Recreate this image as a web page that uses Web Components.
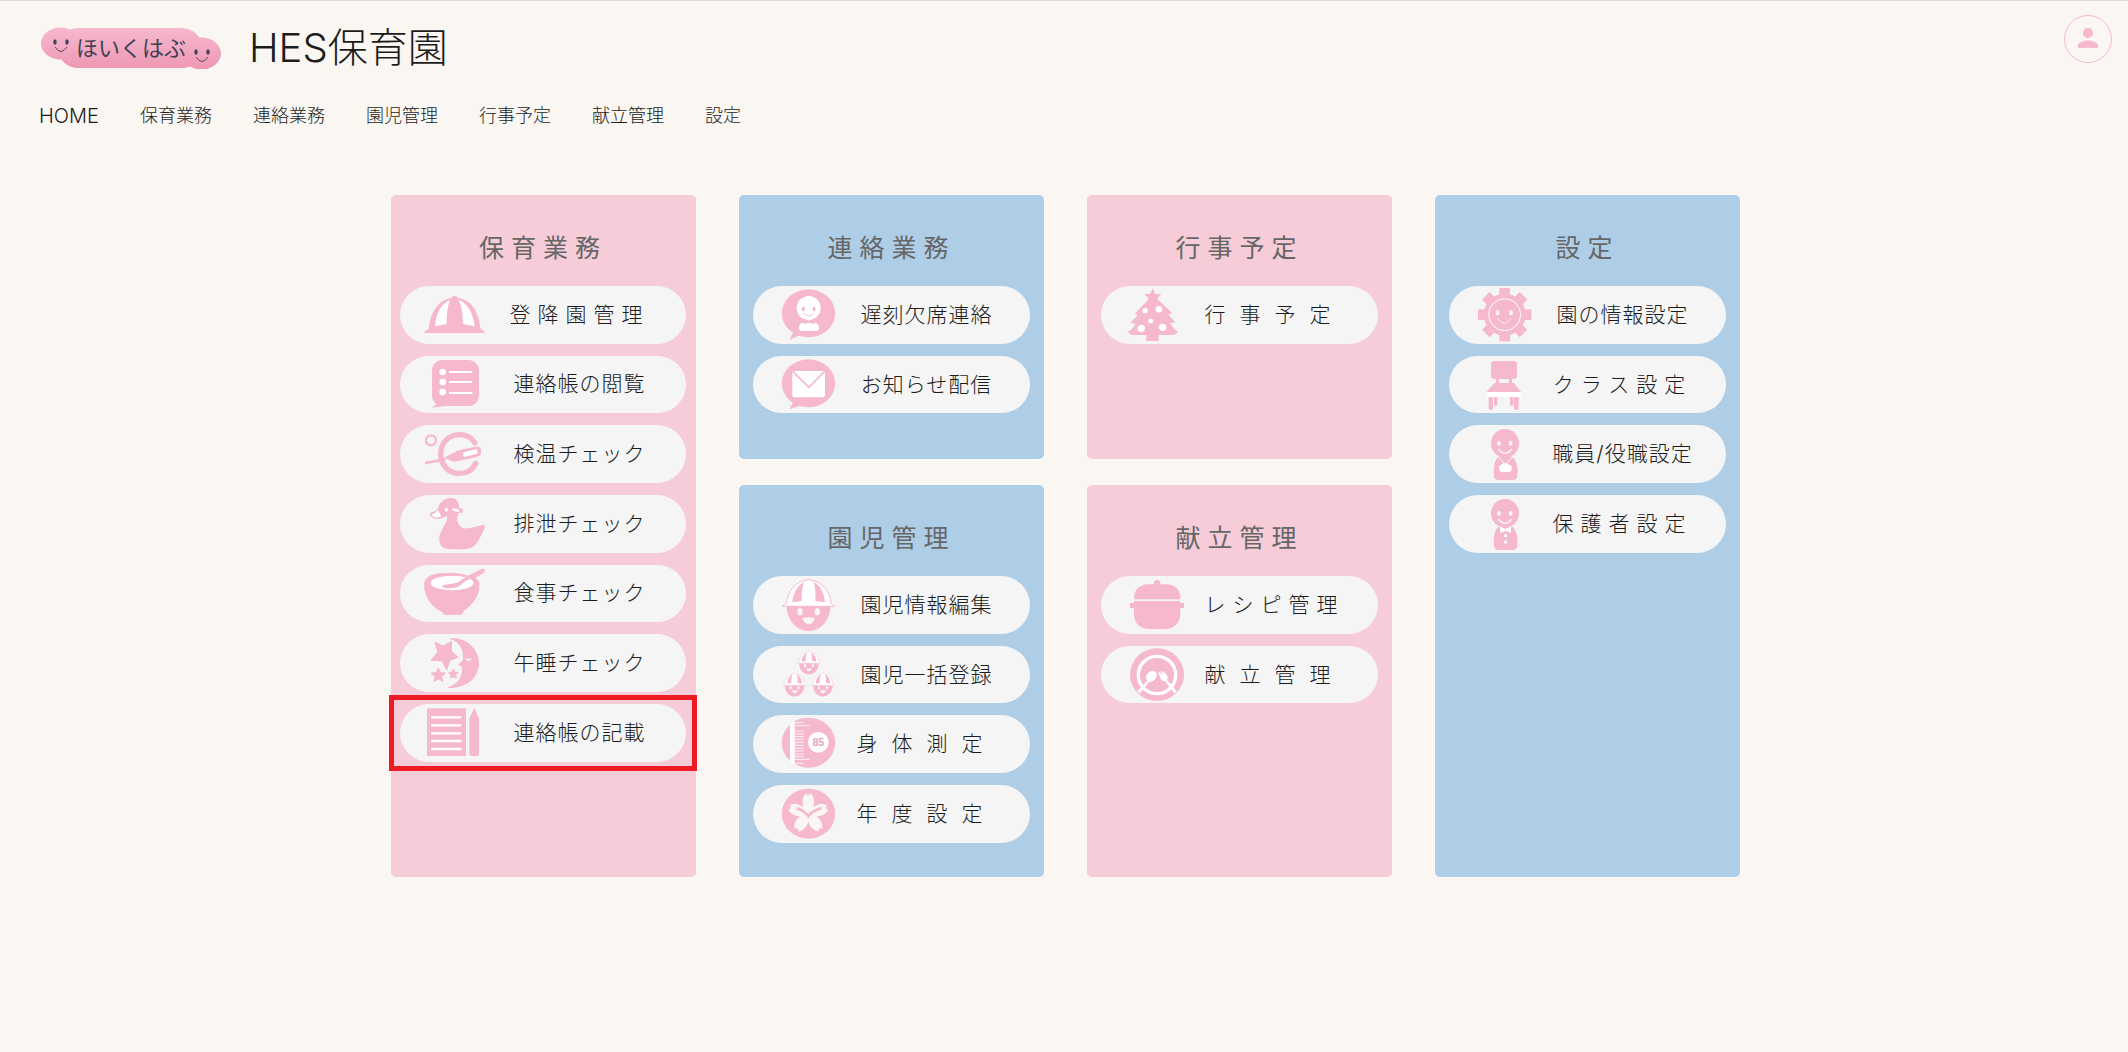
<!DOCTYPE html>
<html lang="ja">
<head>
<meta charset="utf-8">
<title>ほいくはぶ</title>
<style>
  html { background: #faf7f2; }
  body {
    margin: 0;
    --ink: #1c1c1c;
    --rose: #f5b8cd;
    --panel-rose: #f5ccd8;
    --panel-sky: #aecee8;
    color: var(--ink);
    font-family: Inter, "Noto Sans CJK JP", sans-serif;
    font-weight: 300;
  }
</style>
</head>
<body>
<hub-app></hub-app>

<script>
const star = (cx, cy, R, r) => {
  const pts = [];
  for (let i = 0; i < 10; i++) {
    const a = -Math.PI / 2 + i * Math.PI / 5, d = i % 2 ? r : R;
    pts.push((cx + d * Math.cos(a)).toFixed(1) + ',' + (cy + d * Math.sin(a)).toFixed(1));
  }
  return `<polygon points="${pts.join(' ')}" stroke="#f5b8cd" stroke-width="4" stroke-linejoin="round"/>`;
};
const ticks = [743, 768, 777, 785, 793, 802, 811, 820, 828, 837, 845, 865].map(y => `M191 ${y}H218`).join('') + 'M191 752H235M191 853H235';
const child = `
  <path d="M167 390C167 430 195 465 233 465C271 465 298 430 298 390Z"/>
  <path d="M154 391L167 381C170 345 195 315 225 313Q233 306 241 313C272 316 297 345 300 381L311 391Z" fill="#fff" stroke="#f5b8cd" stroke-width="3"/>
  <path d="M184 379C187 350 200 328 219 318C212 340 211 360 212 375Z M282 379C279 350 268 328 248 318C254 340 254 360 253 375Z"/>
  <g fill="#faf7f2"><ellipse cx="207" cy="407" rx="8" ry="11"/><ellipse cx="259" cy="407" rx="8" ry="11"/>
  <path d="M214 426Q233 421 252 426Q247 443 233 445Q219 443 214 426Z"/></g>`;
const headAt = y => `<ellipse cx="240" cy="${y}" rx="42" ry="43"/>
  <g fill="#faf7f2"><ellipse cx="222" cy="${y}" rx="5.500" ry="8"/><ellipse cx="257" cy="${y}" rx="5.500" ry="8"/></g>
  <path d="M220 ${y + 17}Q240 ${y + 43} 260 ${y + 17}" fill="none" stroke="#faf7f2" stroke-width="4"/>`;
const torsoAt = y => `<path d="M220 ${y}C206 ${y + 14} 206 ${y + 35} 207 ${y + 57}Q208 ${y + 70} 222 ${y + 70}H262Q276 ${y + 70} 277 ${y + 57}C279 ${y + 35} 277 ${y + 14} 262 ${y}Z"/>`;

const ICONS = {
  hat: ['132 318 186 174', `
    <path d="M132 459V457L147 445C150 400 175 357 216 354C217 346 231 346 232 354C275 357 298 400 301 445L315 457V459Z"/>
    <path d="M165 439C168 402 182 372 210 359C202 380 199 405 200 432Z M249 432C249 402 245 378 235 359C262 368 280 400 284 439Z" fill="#fff"/>`],
  list: ['132 528 186 174', `
    <rect x="156" y="543" width="141" height="138" rx="32"/><path d="M155 687L176 670L225 680Q185 680 155 687Z"/>
    <g fill="#fff"><circle cx="188" cy="579" r="10"/><circle cx="188" cy="609" r="10"/><circle cx="188" cy="639" r="10"/></g>
    <path d="M207 579H277M207 609H277M207 642H277" stroke="#fff" stroke-width="6"/>`],
  thermo: ['132 735 186 174', `
    <circle cx="153" cy="781" r="15" fill="none" stroke="#f5b8cd" stroke-width="7"/>
    <path d="M284 788C272 769 256 764 238 764C205 764 182 790 182 822C182 855 205 880 238 880C260 880 278 870 287 850" fill="none" stroke="#f5b8cd" stroke-width="16" stroke-linecap="round"/>
    <path d="M135 849L197 838" stroke="#f5b8cd" stroke-width="8"/>
    <path d="M193 833L232 812L285 800Q300 797 303 808V820Q302 828 290 831L235 843Q222 847 214 842Z"/>
    <path d="M250 817L288 808Q292 807 292 812V821L252 831Q248 826 250 817Z" fill="#fff"/>`],
  duck: ['132 45 186 174', `
    <path d="M172 90C178 65 195 53 215 54C232 55 238 68 237 83L249 88L247 99L236 98C230 115 228 133 246 143C262 150 290 138 310 135Q317 135 314 143C305 165 295 185 282 198C270 207 255 208 235 208C215 208 205 208 195 205C180 200 177 185 178 172C180 150 202 130 202 110C198 106 190 114 180 116C165 118 150 112 150 102C152 95 160 97 172 90Z"/>
    <path d="M154 105C163 102 169 97 172 91C177 95 182 102 183 110C172 114 160 113 154 105Z" fill="#fff"/>
    <ellipse cx="199" cy="89" rx="4.500" ry="6" fill="#fff"/><path d="M217 84L237 89V96L218 92Z" fill="#fff"/>`],
  bowl: ['132 255 186 174', `
    <path d="M132 320C132 297 150 286 180 283C210 280 235 280 264 290L304 270Q315 267 315 276Q314 281 308 284L286 296C297 302 299 312 298 322C297 355 275 380 252 395L246 405Q244 408 240 408H196Q190 408 186 398C160 388 133 355 132 320Z"/>
    <ellipse cx="216" cy="312" rx="64" ry="22" fill="#fff"/>
    <path d="M188 319C200 315 222 316 235 309C245 301 255 297 268 288L282 295C262 304 250 308 242 319C230 330 195 330 187 323Z"/>`],
  moon: ['132 462 186 174', `
    <path d="M210 474C260 470 297 508 297 549C297 592 262 626 204 624V621C230 614 247 595 247 560Q232 557 237 551L248 541C252 520 245 487 210 476Z"/>
    <path d="M259 535Q265 547 272 535" fill="none" stroke="#fff" stroke-width="4"/>
    <path d="M166 488L190 499L214 485V515L233 532L209 540L200 568L187 542L154 540L174 518Z" stroke="#f5b8cd" stroke-width="4" stroke-linejoin="round"/>
    ${star(175, 586, 21, 10)}${star(220, 582, 14, 7)}`],
  note: ['132 672 186 174', `
    <rect x="141" y="685" width="117" height="143"/>
    <path d="M153 712H244M153 736H244M153 760H244M153 783H244M153 807H244" stroke="#fff" stroke-width="7"/>
    <path d="M283 685L297 714V821Q297 828 291 828H275Q268 828 268 821V714Z"/>`],
  absent: ['144 318 168 174', `
    <ellipse cx="232.500" cy="400" rx="80" ry="72"/><path d="M188 455L175 480L206 466Z"/>
    <g fill="#fff"><circle cx="233" cy="384" r="36"/><path d="M218 427L233 432L248 427Q264 430 264 444Q264 453 256 453H212Q204 453 204 444Q204 430 218 427Z"/><rect x="220" y="412" width="26" height="20"/></g>
    <path d="M217 415L233 422L250 415V432L233 428L217 432Z"/>
    <ellipse cx="217" cy="387" rx="4.500" ry="7"/><ellipse cx="249" cy="387" rx="4.500" ry="7"/>
    <path d="M219 399Q233 417 247 399" fill="none" stroke="#f5b8cd" stroke-width="3"/>`],
  mail: ['144 528 168 174', `
    <ellipse cx="232.500" cy="610" rx="80" ry="72"/><path d="M188 663L175 688L208 677Z"/>
    <rect x="184" y="573" width="98" height="79" rx="6" fill="#fff"/>
    <path d="M185 574L234 622L281 574" fill="none" stroke="#f5b8cd" stroke-width="5"/>`],
  child: ['144 300 168 174', child],
  children: ['144 510 168 174', [[129, 386], [86, 452], [171, 452]].map(([x, y]) => `<g transform="translate(${x} ${y}) scale(.45)">${child}</g>`).join('')],
  ruler: ['144 720 168 174', `
    <ellipse cx="232.500" cy="803" rx="80" ry="75"/>
    <path d="M177 748Q183 742 191 738V868Q183 864 177 858Z" fill="#fff"/>
    <path d="${ticks}" stroke="#fff" stroke-width="2.500"/>
    <circle cx="262" cy="802" r="31" fill="#fff"/>
    <text x="262" y="813" text-anchor="middle" font-family="Liberation Sans, sans-serif" font-weight="700" font-size="32" fill="#dfa6ba">85</text>`],
  sakura: ['144 927 168 174', `
    <ellipse cx="232.500" cy="1013" rx="80" ry="75"/>
    <g fill="#faf7f2">${[0, 72, 144, 216, 288].map(a => `<path transform="translate(232 1013) rotate(${a})" d="M0 6L-10 -8C-16 -22 -18 -31 -17 -40C-16 -50 -11 -57 -6 -62L-3 -53L0 -60L3 -53L6 -62C11 -57 16 -50 17 -40C18 -31 16 -22 10 -8Z"/>`).join('')}</g>
    <path d="M197 997Q217 1001 232 1020Q247 1001 272 997" fill="none" stroke="#f5b8cd" stroke-width="8"/>`],
  tree: ['153 318 168 174', `
    <path d="M230 325L237 341L256 343L244 355L247 360L289 400L277 404L298 427L283 430C290 442 296 450 306 455Q300 464 290 465H248V483H211V465H170Q160 464 155 455C165 452 175 440 179 432L164 428L186 404L176 401L216 360L217 355L205 343L223 341Z"/>
    <g fill="#fff"><circle cx="207" cy="392" r="8"/><circle cx="249" cy="388" r="10"/><circle cx="224" cy="423" r="7.500"/><circle cx="196" cy="445" r="11"/><circle cx="260" cy="442" r="11"/></g>`],
  pot: ['153 300 168 174', `
    <path d="M174 370V362C176 337 197 325 215 325H233Q233 312 243 312Q253 312 254 325H270C292 325 312 337 313 362V370Z"/>
    <path d="M174 375H313V381H324V396H313V415C312 440 295 459 268 459H219C190 459 174 440 174 415V396H162V381H174Z"/>`],
  plate: ['153 510 168 174', `
    <ellipse cx="243" cy="596" rx="81" ry="79"/><circle cx="243" cy="597" r="56" fill="none" stroke="#fff" stroke-width="10"/>
    <path d="M217 611L221 615L191 652L184 646ZM268 615L272 611L302 646L295 652Z" fill="#fff" stroke="#fff" stroke-width="1"/>
    <ellipse cx="226" cy="601" rx="18" ry="14" transform="rotate(-45 226 601)" fill="#fff"/>
    <path d="M247 590L252 603Q256 616 267 616Q276 613 275 603L265 585L263 586L268 597L257 585L255 587L262 599L250 588Z" fill="#fff"/>`],
  gear: ['150 318 168 174', `
    <circle cx="239" cy="404" r="63"/>
    ${[0, 45, 90, 135, 180, 225, 270, 315].map(a => `<rect x="223" y="324" width="32" height="30" transform="rotate(${a} 239 404)"/>`).join('')}
    <circle cx="239" cy="404" r="48" fill="none" stroke="#fff" stroke-width="3"/>
    <g fill="#faf7f2"><ellipse cx="218" cy="398" rx="6" ry="8"/><ellipse cx="258" cy="398" rx="6" ry="8"/></g>
    <path d="M217 414Q238 445 259 414" fill="none" stroke="#faf7f2" stroke-width="2"/>`],
  chair: ['150 528 168 174', `
    <rect x="198" y="543" width="78" height="54" rx="9"/><path d="M213 595H222V609H251V595H261V609H267L289 637H184L208 609H213Z"/>
    <rect x="184" y="636" width="105" height="15" rx="7" fill="#fff"/>
    <path d="M191 651H204V684Q203 690 198 690Q191 690 191 684ZM267 651H281V684Q281 690 275 690Q268 690 267 684ZM207 651H217V673Q216 678 212 678Q208 678 207 673ZM255 651H265V673Q264 678 260 678Q256 678 255 673Z"/>`],
  staff: ['150 735 168 174', `
    ${torsoAt(830)}${headAt(790)}
    <path d="M219 829L240 852M264 829L244 852" stroke="#faf7f2" stroke-width="3"/>
    <path d="M222 862Q222 855 229 855Q231 849 240 849Q250 849 252 855Q260 855 260 862V868Q259 876 251 876H231Q223 876 222 868Z" fill="#fff"/>`],
  guardian: ['150 945 168 174', `
    ${torsoAt(1040)}${headAt(1000)}
    <path d="M225 1039L241 1047L258 1039V1059L241 1053L225 1059Z" fill="#fff"/>
    <g fill="#fff"><circle cx="242" cy="1067" r="5"/><circle cx="242" cy="1086" r="5"/></g>`],
};

class HubLogo extends HTMLElement {
  constructor() {
    super();
    this.attachShadow({ mode: 'open' }).innerHTML = `
      <style>
        :host { display: grid; place-items: center; }
        svg, span { grid-area: 1 / 1; }
        svg { display: block; width: 180px; height: 42px; }
        span { font-size: 22px; line-height: 32px; font-weight: 400; color: #3f4254; }
      </style>
      <svg viewBox="0 0 180 42" aria-hidden="true">
        <defs><linearGradient id="g" gradientUnits="userSpaceOnUse" x1="0" y1="0" x2="0" y2="42"><stop offset="0" stop-color="#f6b9cf"/><stop offset="1" stop-color="#ef97b4"/></linearGradient></defs>
        <g fill="url(#g)"><rect x="17" y="1" width="144" height="40" rx="20"/><ellipse cx="19.500" cy="16.500" rx="19.500" ry="16"/><ellipse cx="160.500" cy="26.500" rx="19.500" ry="16"/></g>
        <g fill="#3f4254"><ellipse cx="14" cy="15" rx="1.700" ry="2.700"/><ellipse cx="26" cy="15" rx="1.700" ry="2.700"/><ellipse cx="155" cy="25" rx="1.700" ry="2.700"/><ellipse cx="167" cy="25" rx="1.700" ry="2.700"/></g>
        <path d="M14 20Q20 29 26 20M155 30Q161 39 167 30" fill="none" stroke="#5a4a5c" stroke-width="1"/>
      </svg>
      <span><slot></slot></span>`;
  }
}

class HubUserButton extends HTMLElement {
  constructor() {
    super();
    this.attachShadow({ mode: 'open' }).innerHTML = `
      <style>
        :host { display: block; }
        button { display: grid; place-items: center; width: 48px; height: 48px; padding: 0 0 2px; border: 1px solid var(--rose); border-radius: 50%; background: none; color: var(--rose); cursor: pointer; box-sizing: border-box; }
        svg { width: 30px; height: 30px; fill: currentColor; }
      </style>
      <button type="button" aria-label="アカウント"><svg viewBox="0 0 24 24"><path d="M12 12c2.210 0 4-1.790 4-4s-1.790-4-4-4-4 1.790-4 4 1.790 4 4 4zm0 2c-2.670 0-8 1.340-8 4v2h16v-2c0-2.660-5.330-4-8-4z"/></svg></button>`;
  }
}

class HubNav extends HTMLElement {
  constructor() {
    super();
    this.attachShadow({ mode: 'open' }).innerHTML = `
      <style>
        :host { display: block; padding: 0 39px; }
        nav { display: flex; align-items: center; gap: 41px; height: 72px; }
        ::slotted(a) { color: inherit; text-decoration: none; font-size: 18px; line-height: 24px; }
        ::slotted(a.latin) { font-size: 20px; }
      </style>
      <nav><slot></slot></nav>`;
  }
}

class HubHeader extends HTMLElement {
  constructor() {
    super();
    this.attachShadow({ mode: 'open' }).innerHTML = `
      <style>
        :host { display: block; border-top: 1px solid #dcdcdc; }
        .bar { display: flex; align-items: center; gap: 28px; height: 65px; padding: 14px 16px 0 41px; }
        h1 { margin: 0; font-size: 40px; line-height: 48px; font-weight: 300; }
        hub-user-button { margin-left: auto; align-self: flex-start; }
      </style>
      <header>
        <div class="bar">
          <hub-logo>ほいくはぶ</hub-logo>
          <h1><slot></slot></h1>
          <hub-user-button></hub-user-button>
        </div>
        <slot name="nav"></slot>
      </header>`;
  }
}

/* One pill-shaped entry: <hub-item icon="hat">label</hub-item> */
class HubItem extends HTMLElement {
  connectedCallback() {
    if (this.shadowRoot) return;
    const [box, art] = ICONS[this.getAttribute('icon')];
    this.attachShadow({ mode: 'open' }).innerHTML = `
      <style>
        :host { display: block; position: relative; --track: 1px; }
        :host([chars="5"]) { --track: 7px; }
        :host([chars="4"]) { --track: 14px; }
        :host([marked])::after { content: ""; position: absolute; inset: -9px -11px; border: 5px solid #ed1c24; pointer-events: none; }
        a { display: flex; align-items: center; box-sizing: border-box; aspect-ratio: var(--pill-ratio); padding: var(--pill-pad); border-radius: 29px; background: #f5f5f5; color: inherit; text-decoration: none; overflow: hidden; }
        svg { flex: none; display: block; width: var(--icon-w); height: 58px; fill: var(--rose); overflow: visible; }
        span { flex: 1; text-align: center; white-space: nowrap; font-size: 21px; line-height: 28px; letter-spacing: var(--track); }
      </style>
      <a href="#"><svg viewBox="${box}" aria-hidden="true">${art}</svg><span><slot></slot></span></a>`;
  }
}

class HubCard extends HTMLElement {
  connectedCallback() {
    if (this.shadowRoot) return;
    this.attachShadow({ mode: 'open' }).innerHTML = `
      <style>
        :host { display: block; box-sizing: border-box; border-radius: 5px; padding: 32px 14px 24px; background: var(--panel-rose); --pill-ratio: 24 / 5; --pill-pad: 0 12px 0 26px; --icon-w: 56px; }
        :host([tone="sky"]) { background: var(--panel-sky); }
        :host([wide]) { padding-inline: 9px 10px; --pill-ratio: 124 / 25; --pill-pad: 0 13px 0 24px; --icon-w: 62px; }
        h2 { margin: 0 0 17px; text-align: center; font-size: 25px; line-height: 42px; font-weight: 400; letter-spacing: 7px; color: #666; }
        .items { display: flex; flex-direction: column; gap: 12px; }
      </style>
      <section>
        <h2>${this.getAttribute('heading')}</h2>
        <div class="items"><slot></slot></div>
      </section>`;
  }
}

class HubApp extends HTMLElement {
  connectedCallback() {
    if (this.shadowRoot) return;
    this.attachShadow({ mode: 'open' }).innerHTML = `
      <style>
        :host { display: block; }
        main { padding: 43px 40px 43px 43px; }
        .board { display: grid; grid-template-columns: repeat(4, 1fr); grid-template-rows: minmax(264px, auto) minmax(392px, auto); gap: 26px 43px; max-width: 1349px; margin: 0 auto; }
        .tall { grid-row: span 2; }
      </style>
      <hub-header>HES保育園
        <hub-nav slot="nav">
          <a href="#" class="latin">HOME</a><a href="#">保育業務</a><a href="#">連絡業務</a><a href="#">園児管理</a><a href="#">行事予定</a><a href="#">献立管理</a><a href="#">設定</a>
        </hub-nav>
      </hub-header>
      <main>
        <div class="board">
          <hub-card class="tall" wide heading="保育業務">
            <hub-item icon="hat" chars="5">登降園管理</hub-item>
            <hub-item icon="list">連絡帳の閲覧</hub-item>
            <hub-item icon="thermo">検温チェック</hub-item>
            <hub-item icon="duck">排泄チェック</hub-item>
            <hub-item icon="bowl">食事チェック</hub-item>
            <hub-item icon="moon">午睡チェック</hub-item>
            <hub-item icon="note" marked>連絡帳の記載</hub-item>
          </hub-card>
          <hub-card tone="sky" heading="連絡業務">
            <hub-item icon="absent">遅刻欠席連絡</hub-item>
            <hub-item icon="mail">お知らせ配信</hub-item>
          </hub-card>
          <hub-card heading="行事予定">
            <hub-item icon="tree" chars="4">行事予定</hub-item>
          </hub-card>
          <hub-card class="tall" tone="sky" heading="設定">
            <hub-item icon="gear">園の情報設定</hub-item>
            <hub-item icon="chair" chars="5">クラス設定</hub-item>
            <hub-item icon="staff">職員/役職設定</hub-item>
            <hub-item icon="guardian" chars="5">保護者設定</hub-item>
          </hub-card>
          <hub-card tone="sky" heading="園児管理">
            <hub-item icon="child">園児情報編集</hub-item>
            <hub-item icon="children">園児一括登録</hub-item>
            <hub-item icon="ruler" chars="4">身体測定</hub-item>
            <hub-item icon="sakura" chars="4">年度設定</hub-item>
          </hub-card>
          <hub-card heading="献立管理">
            <hub-item icon="pot" chars="5">レシピ管理</hub-item>
            <hub-item icon="plate" chars="4">献立管理</hub-item>
          </hub-card>
        </div>
      </main>`;
  }
}

customElements.define('hub-logo', HubLogo);
customElements.define('hub-user-button', HubUserButton);
customElements.define('hub-nav', HubNav);
customElements.define('hub-header', HubHeader);
customElements.define('hub-item', HubItem);
customElements.define('hub-card', HubCard);
customElements.define('hub-app', HubApp);
</script>
</body>
</html>
